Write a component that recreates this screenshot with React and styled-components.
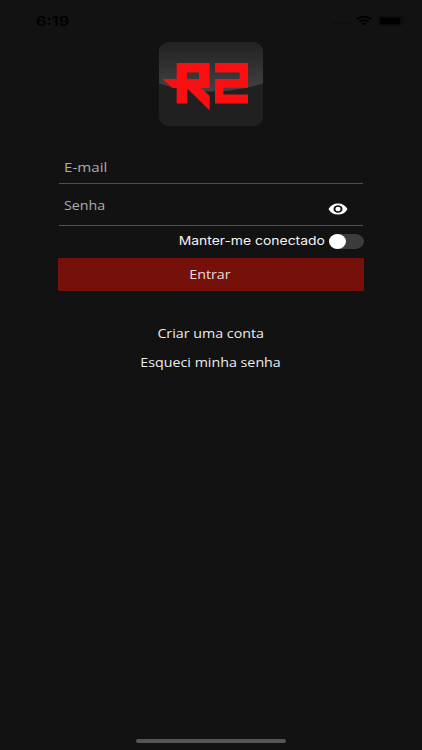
import React, { useState } from "react";
import styled, { createGlobalStyle } from "styled-components";

const GlobalStyle = createGlobalStyle`
  * {
    box-sizing: border-box;
  }

  body {
    margin: 0;
    background-color: #121212;
  }
`;

const Screen = styled.div`
  display: flex;
  flex-direction: column;
  align-items: center;
  width: 422px;
  height: 750px;
  overflow: hidden;
  background-color: #121212;
  font-family: "Open Sans", "Noto Sans", sans-serif;
  color: #ececec;
`;

const StatusBar = styled.header`
  display: flex;
  justify-content: space-between;
  align-items: center;
  width: 100%;
  height: 42px;
  padding: 0 17px 0 36px;
`;

const StatusIcons = styled.div`
  display: flex;
  align-items: center;
  gap: 6px;
`;

// Wide lettering: every text is stretched from the side it is aligned to
const Text = styled.span`
  display: inline-block;
  white-space: nowrap;
  line-height: 20px;
  font-size: ${(props) => props.$size || 11.7}px;
  transform: scaleX(${(props) => props.$stretch || 1.22});
  transform-origin: ${(props) => props.$origin || "center"};
`;

const Clock = styled(Text)`
  font-family: Inter, sans-serif;
  font-weight: 600;
  color: #000;
`;

const Form = styled.form`
  display: flex;
  flex-direction: column;
  width: 306px;
  margin-top: 25.5px;
`;

const Field = styled.label`
  display: flex;
  justify-content: space-between;
  align-items: center;
  width: 304px;
  height: ${(props) => props.$height}px;
  padding: ${(props) => props.$padding};
  margin-left: 1px;
  border-bottom: 1px solid #505050;
  color: #acacac;
`;

const IconButton = styled.button`
  display: flex;
  margin-top: 8px;
  padding: 0;
  border: none;
  background: none;
  cursor: pointer;
`;

const Remember = styled.div`
  display: flex;
  justify-content: flex-end;
  align-items: center;
  gap: 4px;
  height: 32px;
  padding-bottom: 2px;
  font-family: Inter, sans-serif;
  color: #f4f4f4;
`;

const Toggle = styled.button`
  display: flex;
  align-items: center;
  justify-content: ${(props) => (props.$on ? "flex-end" : "flex-start")};
  width: 35px;
  height: 15px;
  padding: 0;
  border: none;
  border-radius: 9px / 7.5px;
  background-color: #3c3c3c;
  cursor: pointer;
`;

const Knob = styled.span`
  width: 17px;
  height: 15px;
  border-radius: 50%;
  background-color: #fff;
`;

const SubmitButton = styled.button`
  height: 33px;
  padding: 0 2px 1px 0;
  border: none;
  border-radius: 1px;
  background-color: #75110a;
  color: #ecdcdb;
  font-family: inherit;
  cursor: pointer;
`;

const Links = styled.nav`
  display: flex;
  flex-direction: column;
  align-items: center;
  gap: 9px;
  margin-top: 32px;
  padding-right: 1px;
`;

const HomeIndicator = styled.div`
  width: 150px;
  height: 4px;
  margin-top: auto;
  margin-bottom: 7px;
  border-radius: 2px;
  background-color: #555;
`;

const Logo = () => (
  <svg width="104" height="84.5" viewBox="27 24 312 253" preserveAspectRatio="none">
    <defs>
      <linearGradient id="gloss" x1="0" y1="0" x2="0" y2="1">
        <stop offset="0" stopColor="#222" />
        <stop offset="1" stopColor="#424242" />
      </linearGradient>
      <clipPath id="tile">
        <rect x="27" y="24" width="312" height="253" rx="32" ry="27" />
      </clipPath>
    </defs>
    <g clipPath="url(#tile)">
      <rect x="27" y="24" width="312" height="253" fill="#202020" />
      <path d="M27 24H339V148Q183 196 27 148Z" fill="url(#gloss)" />
    </g>
    <path
      fill="#f90f12"
      fillRule="evenodd"
      d="M80 87H179V162H154L179 186V229L112 163V208H80V162H67L38 135H80ZM111 115V135H147V115Z"
    />
    <path
      fill="#f90f12"
      d="M195 87H294V161H220V181H294V208H195V135H269V115H195Z"
    />
  </svg>
);

const SignalIcon = () => (
  <svg width="18" height="6" viewBox="0 0 18 6" fill="#0d0d0d">
    <rect x="0" y="4" width="3" height="2" />
    <rect x="5" y="4" width="3" height="2" />
    <rect x="10" y="4" width="3" height="2" />
    <rect x="15" y="4" width="3" height="2" />
  </svg>
);

const WifiIcon = () => (
  <svg width="16" height="10" viewBox="0 0 16 10" fill="none" stroke="#000">
    <path d="M.8 3.4Q8-2 15.2 3.4" strokeWidth="1.9" />
    <path d="M3.4 5.9Q8 2.2 12.6 5.9" strokeWidth="1.7" />
    <path d="M5.6 7.6Q8 5.8 10.4 7.6L8 9.8Z" fill="#000" stroke="none" />
  </svg>
);

const BatteryIcon = () => (
  <svg width="27" height="10" viewBox="0 0 27 10">
    <rect x=".5" y=".5" width="23.5" height="9" rx="2" fill="none" stroke="#0d0d0d" />
    <rect x="2" y="1.5" width="20.5" height="7" rx="1" fill="#000" />
    <path d="M25.5 3.5Q27 5 25.5 6.5Z" fill="#090909" />
  </svg>
);

const EyeIcon = () => (
  <svg width="20" height="12" viewBox="0 0 20 12">
    <path d="M.5 6C2.4 2.4 5.8.4 10 .4S17.6 2.4 19.5 6C17.6 9.6 14.2 11.6 10 11.6S2.4 9.6.5 6Z" fill="#fff" />
    <ellipse cx="10" cy="6" rx="4.5" ry="3.8" fill="#121212" />
    <ellipse cx="10" cy="6" rx="2.6" ry="2.2" fill="#fff" />
  </svg>
);

const App = () => {
  const [keepLogged, setKeepLogged] = useState(false);

  return (
    <>
      <GlobalStyle />
      <Screen>
        <StatusBar>
          <Clock $size={13.5} $origin="left">6:19</Clock>
          <StatusIcons>
            <SignalIcon />
            <WifiIcon />
            <BatteryIcon />
          </StatusIcons>
        </StatusBar>
        <Logo />
        <Form onSubmit={(e) => e.preventDefault()}>
          <Field $height={32} $padding="1px 0 0 4.5px">
            <Text $size={12.4} $origin="left">E-mail</Text>
          </Field>
          <Field $height={42} $padding="1px 15px 0 4.5px">
            <Text $origin="left">Senha</Text>
            <IconButton type="button" aria-label="Mostrar senha">
              <EyeIcon />
            </IconButton>
          </Field>
          <Remember>
            <Text $origin="right" $stretch={1.19}>Manter-me conectado</Text>
            <Toggle
              type="button"
              $on={keepLogged}
              onClick={() => setKeepLogged(!keepLogged)}
            >
              <Knob />
            </Toggle>
          </Remember>
          <SubmitButton type="submit">
            <Text>Entrar</Text>
          </SubmitButton>
        </Form>
        <Links>
          <Text>Criar uma conta</Text>
          <Text>Esqueci minha senha</Text>
        </Links>
        <HomeIndicator />
      </Screen>
    </>
  );
};

export default App;
